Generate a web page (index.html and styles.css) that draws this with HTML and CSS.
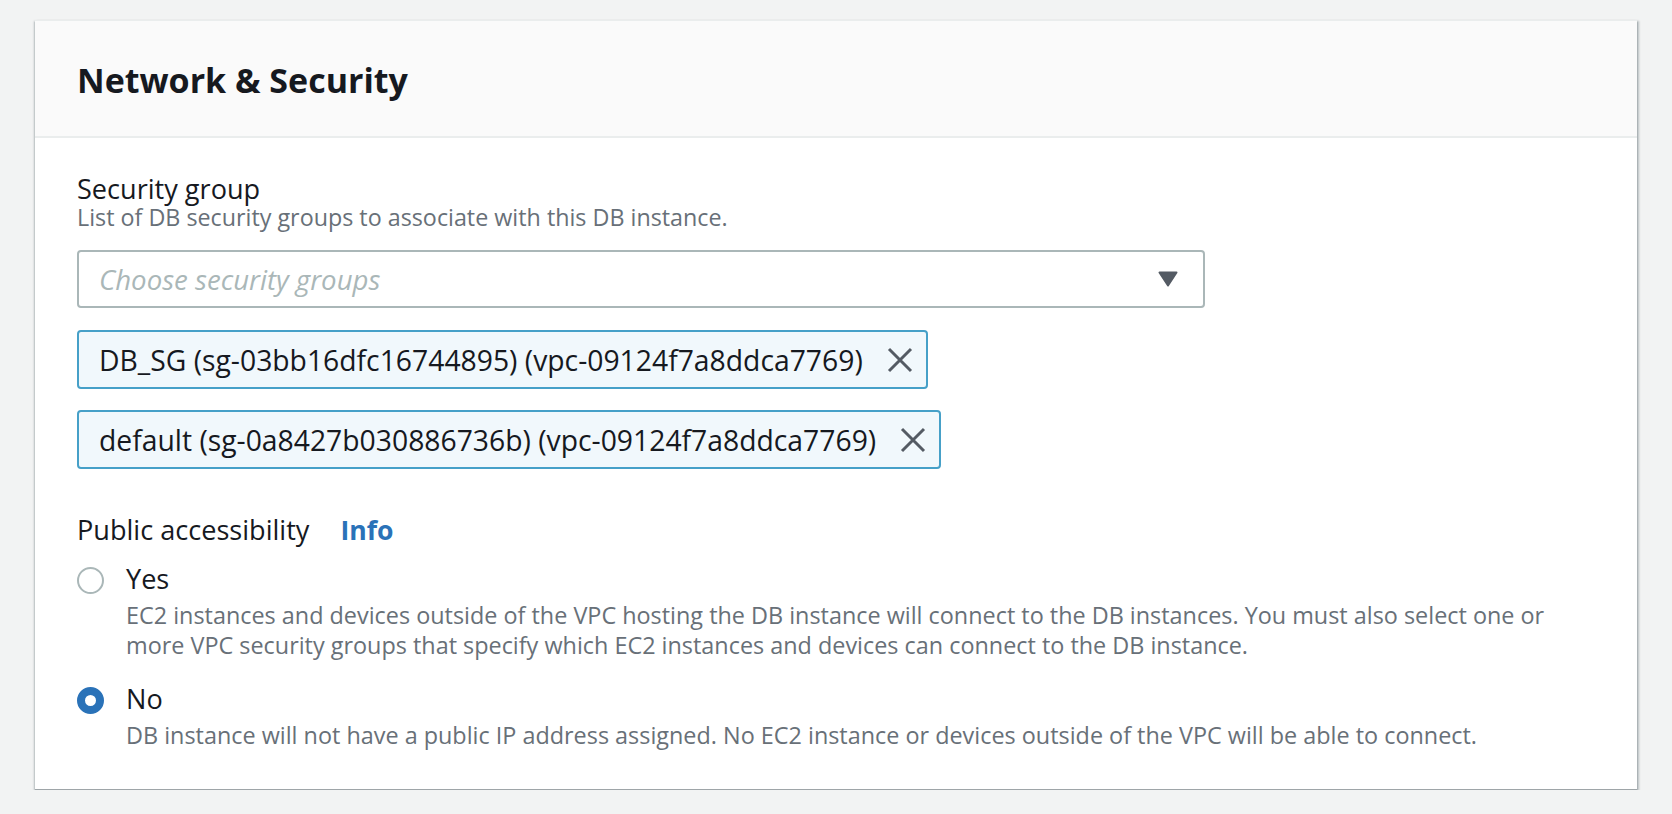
FILE: index.html
```html
<!DOCTYPE html>
<html lang="en">
<head>
<meta charset="utf-8">
<title>Network &amp; Security</title>
<link rel="stylesheet" href="styles.css">
</head>
<body>
<div class="page">
  <section class="card">
    <header class="card-header">
      <h2 class="card-title">Network &amp; Security</h2>
    </header>
    <div class="card-body">
      <div class="field">
        <div class="field-label">Security group</div>
        <div class="field-desc">List of DB security groups to associate with this DB instance.</div>
        <div class="select">
          <span class="select-placeholder">Choose security groups</span>
          <svg class="select-caret" width="20" height="16" viewBox="0 0 20 16"><path d="M1.5 1.5 H18.5 L10 14.5 Z" fill="#545b64" stroke="#545b64" stroke-width="2" stroke-linejoin="round"/></svg>
        </div>
        <div class="tokens">
          <div class="token">
            <span class="token-text">DB_SG (sg-03bb16dfc16744895) (vpc-09124f7a8ddca7769)</span>
            <svg class="token-x" width="26" height="26" viewBox="0 0 26 26"><path d="M2 2 L24 24 M24 2 L2 24" stroke="#545b64" stroke-width="3" fill="none"/></svg>
          </div>
          <div class="token">
            <span class="token-text">default (sg-0a8427b030886736b) (vpc-09124f7a8ddca7769)</span>
            <svg class="token-x" width="26" height="26" viewBox="0 0 26 26"><path d="M2 2 L24 24 M24 2 L2 24" stroke="#545b64" stroke-width="3" fill="none"/></svg>
          </div>
        </div>
      </div>

      <div class="field field-public">
        <div class="field-label">Public accessibility <a class="info-link" href="#">Info</a></div>
        <div class="radio-group">
          <label class="radio">
            <span class="radio-circle"></span>
            <span class="radio-content">
              <span class="radio-label">Yes</span>
              <span class="radio-desc">EC2 instances and devices outside of the VPC hosting the DB instance will connect to the DB instances. You must also select one or more VPC security groups that specify which EC2 instances and devices can connect to the DB instance.</span>
            </span>
          </label>
          <label class="radio radio-checked">
            <span class="radio-circle"></span>
            <span class="radio-content">
              <span class="radio-label">No</span>
              <span class="radio-desc">DB instance will not have a public IP address assigned. No EC2 instance or devices outside of the VPC will be able to connect.</span>
            </span>
          </label>
        </div>
      </div>
    </div>
  </section>
</div>
</body>
</html>
```
FILE: styles.css
```css
html, body {
  margin: 0;
  padding: 0;
  background: #f2f3f3;
}
body {
  font-family: "Open Sans", "Noto Sans", sans-serif;
  color: #16191f;
}
.page {
  padding: 20px 35px 0 35px;
}
.card {
  background: #ffffff;
  box-shadow: 0 2px 1px 0 rgba(0, 28, 36, 0.35), 2px 1px 2px 0 rgba(0, 28, 36, 0.25), -1px 1px 2px 0 rgba(0, 28, 36, 0.2);
  border-top: 1px solid #eaeded;
  border-bottom: 1px solid #9ea5a8;
}
.card-header {
  background: #fafafa;
  border-bottom: 2px solid #eaeded;
  padding: 39px 42px 36px 42px;
}
.card-title {
  margin: 0;
  font-size: 34px;
  line-height: 40px;
  font-weight: 700;
  color: #16191f;
}
.card-body {
  padding: 36px 42px 39px 42px;
}
.field-label {
  font-size: 27.1px;
  line-height: 30px;
  color: #16191f;
  display: flex;
  align-items: baseline;
}
.field-desc {
  font-size: 23.3px;
  line-height: 26px;
  color: #687078;
}
.select {
  margin-top: 20px;
  max-width: 1128px;
  height: 58px;
  box-sizing: border-box;
  border: 2px solid #aab7b8;
  border-radius: 4px;
  display: flex;
  align-items: center;
  justify-content: space-between;
  padding: 0 25px 0 20px;
  background: #fff;
}
.select-placeholder {
  font-style: italic;
  font-size: 27.6px;
  color: #aab7b8;
}
.select-caret {
  display: block;
}
.tokens {
  margin-top: 22px;
  display: flex;
  flex-direction: column;
  align-items: flex-start;
  gap: 21px;
}
.token {
  height: 59px;
  box-sizing: border-box;
  border: 2px solid #46a0c8;
  border-radius: 4px;
  background: #f1f8fc;
  display: flex;
  align-items: center;
  padding: 0 13px 0 20px;
  gap: 24px;
}
.token-text {
  font-size: 28.3px;
  color: #16191f;
  white-space: nowrap;
}
.token-x {
  display: block;
}
.field-public {
  margin-top: 46px;
}
.info-link {
  margin-left: 31px;
  font-size: 26.6px;
  font-weight: 700;
  color: #2a72b8;
  text-decoration: none;
}
.radio-group {
  margin-top: 19px;
  display: flex;
  flex-direction: column;
  gap: 24px;
}
.radio {
  display: flex;
  align-items: flex-start;
  gap: 22px;
}
.radio-circle {
  flex: none;
  width: 27px;
  height: 27px;
  box-sizing: border-box;
  border-radius: 50%;
  border: 2px solid #aab7b8;
  background: #fff;
  margin-top: 3px;
}
.radio-checked .radio-circle {
  border: 8.5px solid #2a72b8;
}
.radio-content {
  display: flex;
  flex-direction: column;
  gap: 6px;
}
.radio-label {
  font-size: 27.1px;
  line-height: 30px;
  color: #16191f;
}
.radio-desc {
  font-size: 23.4px;
  line-height: 30px;
  color: #687078;
}
```
